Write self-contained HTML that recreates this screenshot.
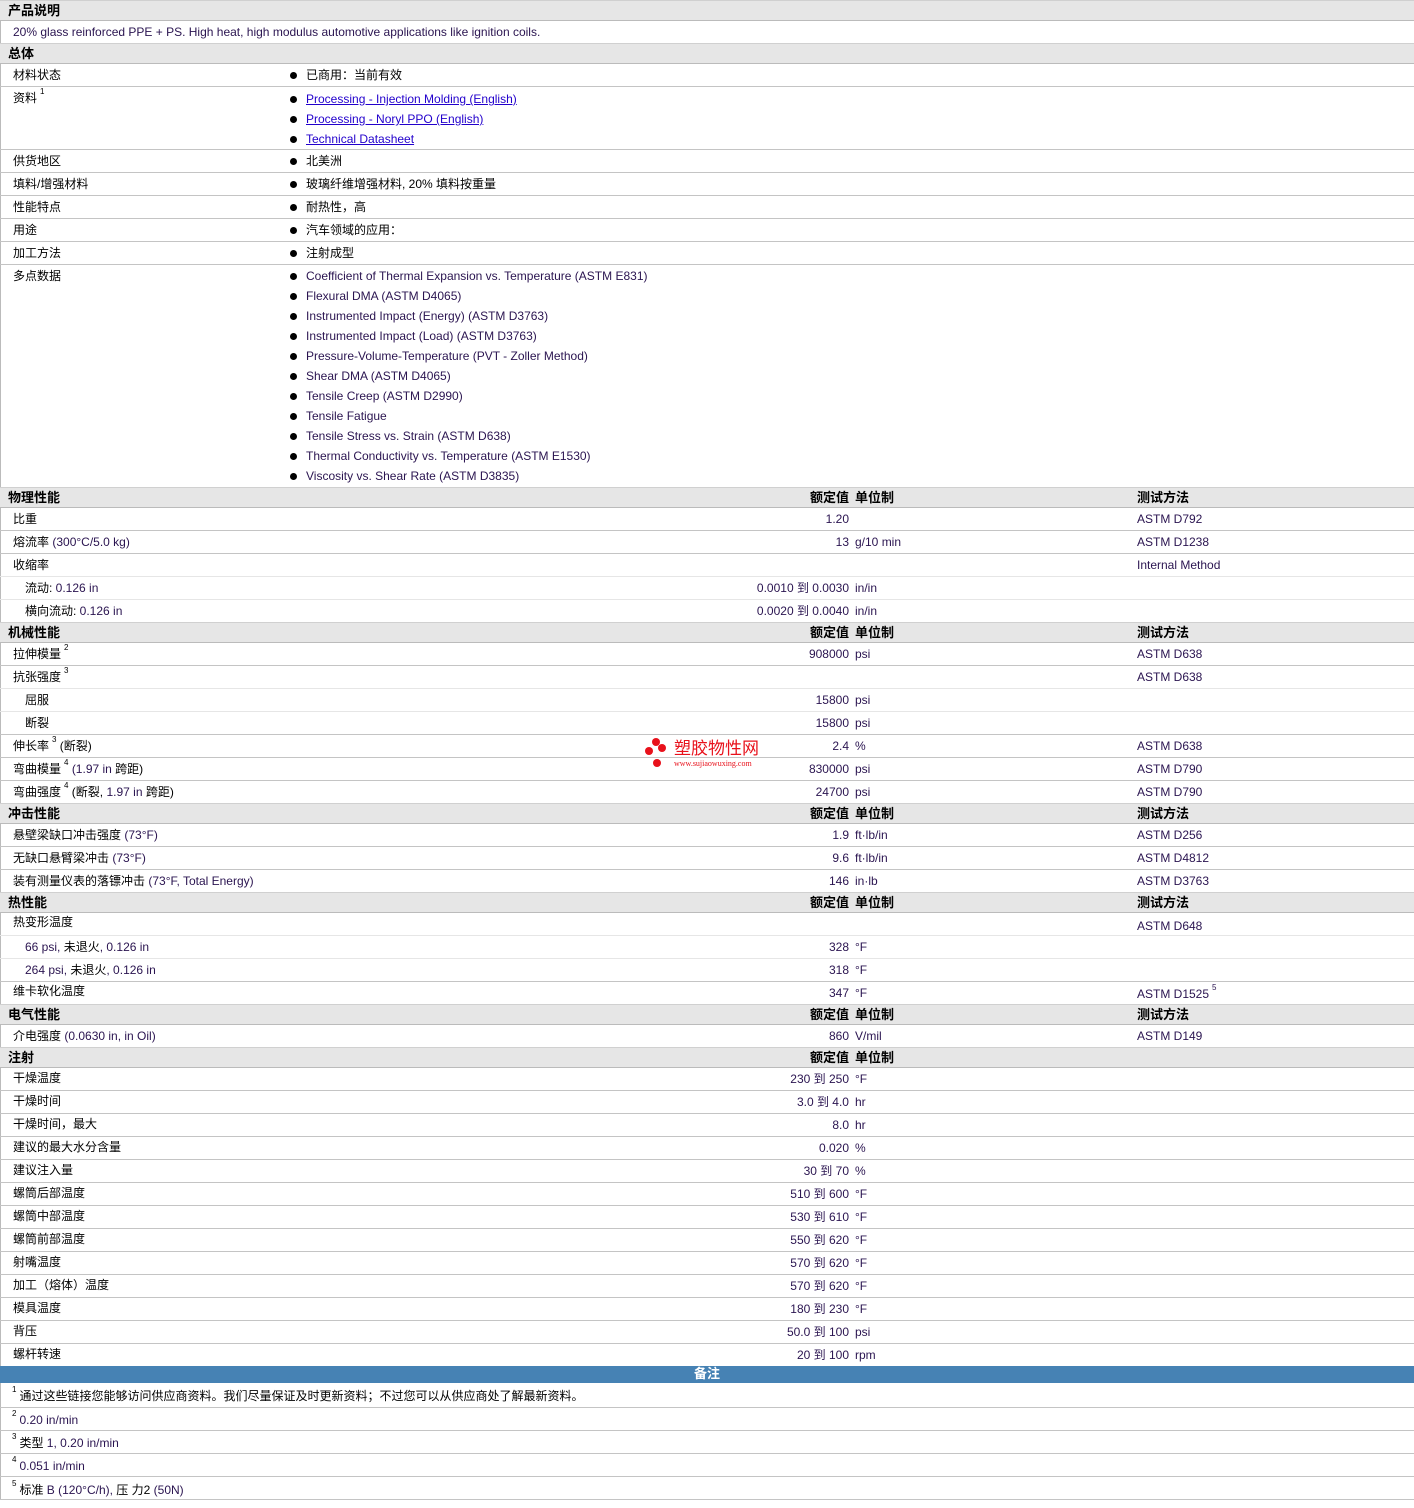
<!DOCTYPE html>
<html><head><meta charset="utf-8"><style>
body{margin:0;background:#fff;width:1414px;height:1508px;position:relative;overflow:hidden;font-family:"Liberation Sans","Noto Sans CJK SC",sans-serif;font-size:12px;color:#000}
.r{position:absolute;left:0;width:1414px;height:22px;border-bottom:1px solid #c4c4c4;box-sizing:content-box}
.s{border-bottom-color:#e6e6e6}
.h{background:#e6e6e6;height:19px;border-top:1px solid #d0d0d0;border-bottom:1px solid #bbb;font-weight:bold;font-size:13px}
.r span{position:absolute;top:4px;white-space:nowrap;line-height:14px}
.r span span{line-height:14px}
.h span{top:2px;line-height:15px}
.l{left:13px}.l2{left:25px}
.v{right:565px;color:#2a1450}
.u{left:855px;color:#2a1450}
.m{left:1137px;color:#2a1450}
.b{left:290px}
.b:before{content:"";position:absolute;left:0;top:4px;width:7px;height:7px;border-radius:50%;background:#000}
.b i{font-style:normal;margin-left:16px}
a{color:#2200cc;text-decoration:underline}
sup{font-size:8px;line-height:8px;vertical-align:top;position:relative;top:-3px;margin-left:3px}
.e{color:#2a1450}
#left{position:absolute;left:0;top:0;width:1px;height:1500px;background:#bbb}
</style></head><body>
<div id="left"></div>
<div class="r h" style="top:0"><span class="l" style="left:8px">产品说明</span></div>
<div class="r" style="top:21px"><span class="l e">20% glass reinforced PPE + PS. High heat, high modulus automotive applications like ignition coils.</span></div>
<div class="r h" style="top:43px"><span style="left:8px">总体</span></div>
<div class="r" style="top:64px"><span class="l">材料状态</span><span class="b"><i>已商用：当前有效</i></span></div>
<div class="r" style="top:87px;height:62px"><span class="l">资料<sup>1</sup></span><span class="b" style="top:5px"><i><a>Processing - Injection Molding (English)</a></i></span><span class="b" style="top:25px"><i><a>Processing - Noryl PPO (English)</a></i></span><span class="b" style="top:45px"><i><a>Technical Datasheet</a></i></span></div>
<div class="r" style="top:150px"><span class="l">供货地区</span><span class="b"><i>北美洲</i></span></div>
<div class="r" style="top:173px"><span class="l">填料/增强材料</span><span class="b"><i>玻璃纤维增强材料, 20% 填料按重量</i></span></div>
<div class="r" style="top:196px"><span class="l">性能特点</span><span class="b"><i>耐热性，高</i></span></div>
<div class="r" style="top:219px"><span class="l">用途</span><span class="b"><i>汽车领域的应用：</i></span></div>
<div class="r" style="top:242px"><span class="l">加工方法</span><span class="b"><i>注射成型</i></span></div>
<div class="r" style="top:265px;height:222px"><span class="l">多点数据</span>
<span class="b e" style="top:4px"><i>Coefficient of Thermal Expansion vs. Temperature (ASTM E831)</i></span>
<span class="b e" style="top:24px"><i>Flexural DMA (ASTM D4065)</i></span>
<span class="b e" style="top:44px"><i>Instrumented Impact (Energy) (ASTM D3763)</i></span>
<span class="b e" style="top:64px"><i>Instrumented Impact (Load) (ASTM D3763)</i></span>
<span class="b e" style="top:84px"><i>Pressure-Volume-Temperature (PVT - Zoller Method)</i></span>
<span class="b e" style="top:104px"><i>Shear DMA (ASTM D4065)</i></span>
<span class="b e" style="top:124px"><i>Tensile Creep (ASTM D2990)</i></span>
<span class="b e" style="top:144px"><i>Tensile Fatigue</i></span>
<span class="b e" style="top:164px"><i>Tensile Stress vs. Strain (ASTM D638)</i></span>
<span class="b e" style="top:184px"><i>Thermal Conductivity vs. Temperature (ASTM E1530)</i></span>
<span class="b e" style="top:204px"><i>Viscosity vs. Shear Rate (ASTM D3835)</i></span></div>
<div class="r h" style="top:487px"><span style="left:8px">物理性能</span><span style="right:565px">额定值</span><span style="left:855px">单位制</span><span style="left:1137px">测试方法</span></div>
<div class="r" style="top:508px"><span class="l">比重</span><span class="v">1.20</span><span class="m">ASTM D792</span></div>
<div class="r" style="top:531px"><span class="l">熔流率 <span class="e" style="position:static">(300°C/5.0 kg)</span></span><span class="v">13</span><span class="u">g/10 min</span><span class="m">ASTM D1238</span></div>
<div class="r s" style="top:554px"><span class="l">收缩率</span><span class="m">Internal Method</span></div>
<div class="r s" style="top:577px"><span class="l2">流动: <span class="e" style="position:static">0.126 in</span></span><span class="v">0.0010 到 0.0030</span><span class="u">in/in</span></div>
<div class="r" style="top:600px"><span class="l2">横向流动: <span class="e" style="position:static">0.126 in</span></span><span class="v">0.0020 到 0.0040</span><span class="u">in/in</span></div>
<div class="r h" style="top:622px"><span style="left:8px">机械性能</span><span style="right:565px">额定值</span><span style="left:855px">单位制</span><span style="left:1137px">测试方法</span></div>
<div class="r" style="top:643px"><span class="l">拉伸模量<sup>2</sup></span><span class="v">908000</span><span class="u">psi</span><span class="m">ASTM D638</span></div>
<div class="r s" style="top:666px"><span class="l">抗张强度<sup>3</sup></span><span class="m">ASTM D638</span></div>
<div class="r s" style="top:689px"><span class="l2">屈服</span><span class="v">15800</span><span class="u">psi</span></div>
<div class="r" style="top:712px"><span class="l2">断裂</span><span class="v">15800</span><span class="u">psi</span></div>
<div class="r" style="top:735px"><span class="l">伸长率<sup>3</sup> (断裂)</span><span class="v">2.4</span><span class="u">%</span><span class="m">ASTM D638</span></div>
<div class="r" style="top:758px"><span class="l">弯曲模量<sup>4</sup> <span class="e" style="position:static">(1.97 in</span> 跨距)</span><span class="v">830000</span><span class="u">psi</span><span class="m">ASTM D790</span></div>
<div class="r" style="top:781px"><span class="l">弯曲强度<sup>4</sup> (断裂, <span class="e" style="position:static">1.97 in</span> 跨距)</span><span class="v">24700</span><span class="u">psi</span><span class="m">ASTM D790</span></div>
<div class="r h" style="top:803px"><span style="left:8px">冲击性能</span><span style="right:565px">额定值</span><span style="left:855px">单位制</span><span style="left:1137px">测试方法</span></div>
<div class="r" style="top:824px"><span class="l">悬壁梁缺口冲击强度 <span class="e" style="position:static">(73°F)</span></span><span class="v">1.9</span><span class="u">ft·lb/in</span><span class="m">ASTM D256</span></div>
<div class="r" style="top:847px"><span class="l">无缺口悬臂梁冲击 <span class="e" style="position:static">(73°F)</span></span><span class="v">9.6</span><span class="u">ft·lb/in</span><span class="m">ASTM D4812</span></div>
<div class="r" style="top:870px"><span class="l">装有测量仪表的落镖冲击 <span class="e" style="position:static">(73°F, Total Energy)</span></span><span class="v">146</span><span class="u">in·lb</span><span class="m">ASTM D3763</span></div>
<div class="r h" style="top:892px"><span style="left:8px">热性能</span><span style="right:565px">额定值</span><span style="left:855px">单位制</span><span style="left:1137px">测试方法</span></div>
<div class="r s" style="top:913px"><span class="l" style="top:2px">热变形温度</span><span class="m" style="top:6px">ASTM D648</span></div>
<div class="r s" style="top:936px"><span class="l2 e">66 psi, <span style="position:static;color:#000">未退火</span>, 0.126 in</span><span class="v">328</span><span class="u">°F</span></div>
<div class="r" style="top:959px"><span class="l2 e">264 psi, <span style="position:static;color:#000">未退火</span>, 0.126 in</span><span class="v">318</span><span class="u">°F</span></div>
<div class="r" style="top:982px"><span class="l" style="top:2px">维卡软化温度</span><span class="v">347</span><span class="u">°F</span><span class="m" style="top:5px">ASTM D1525<sup>5</sup></span></div>
<div class="r h" style="top:1004px"><span style="left:8px">电气性能</span><span style="right:565px">额定值</span><span style="left:855px">单位制</span><span style="left:1137px">测试方法</span></div>
<div class="r" style="top:1025px"><span class="l">介电强度 <span class="e" style="position:static">(0.0630 in, in Oil)</span></span><span class="v">860</span><span class="u">V/mil</span><span class="m">ASTM D149</span></div>
<div class="r h" style="top:1047px"><span style="left:8px">注射</span><span style="right:565px">额定值</span><span style="left:855px">单位制</span></div>
<div class="r" style="top:1068px"><span class="l" style="top:3px">干燥温度</span><span class="v">230 到 250</span><span class="u">°F</span></div>
<div class="r" style="top:1091px"><span class="l" style="top:3px">干燥时间</span><span class="v">3.0 到 4.0</span><span class="u">hr</span></div>
<div class="r" style="top:1114px"><span class="l" style="top:3px">干燥时间，最大</span><span class="v">8.0</span><span class="u">hr</span></div>
<div class="r" style="top:1137px"><span class="l" style="top:3px">建议的最大水分含量</span><span class="v">0.020</span><span class="u">%</span></div>
<div class="r" style="top:1160px"><span class="l" style="top:3px">建议注入量</span><span class="v">30 到 70</span><span class="u">%</span></div>
<div class="r" style="top:1183px"><span class="l" style="top:3px">螺筒后部温度</span><span class="v">510 到 600</span><span class="u">°F</span></div>
<div class="r" style="top:1206px"><span class="l" style="top:3px">螺筒中部温度</span><span class="v">530 到 610</span><span class="u">°F</span></div>
<div class="r" style="top:1229px"><span class="l" style="top:3px">螺筒前部温度</span><span class="v">550 到 620</span><span class="u">°F</span></div>
<div class="r" style="top:1252px"><span class="l" style="top:3px">射嘴温度</span><span class="v">570 到 620</span><span class="u">°F</span></div>
<div class="r" style="top:1275px"><span class="l" style="top:3px">加工（熔体）温度</span><span class="v">570 到 620</span><span class="u">°F</span></div>
<div class="r" style="top:1298px"><span class="l" style="top:3px">模具温度</span><span class="v">180 到 230</span><span class="u">°F</span></div>
<div class="r" style="top:1321px"><span class="l" style="top:3px">背压</span><span class="v">50.0 到 100</span><span class="u">psi</span></div>
<div class="r" style="top:1344px;border-bottom:none"><span class="l" style="top:3px">螺杆转速</span><span class="v">20 到 100</span><span class="u">rpm</span></div>
<div style="position:absolute;top:1366px;left:0;width:1414px;height:17px;background:#4682b4;color:#fff;font-weight:bold;font-size:13px;text-align:center;line-height:16px">备注</div>
<div class="r" style="top:1384px;height:23px"><span class="l" style="left:12px;top:5px"><sup style="margin:0 3px 0 0">1</sup>通过这些链接您能够访问供应商资料。我们尽量保证及时更新资料；不过您可以从供应商处了解最新资料。</span></div>
<div class="r" style="top:1408px"><span class="l" style="left:12px;top:5px"><sup style="margin:0 3px 0 0">2</sup><span class="e" style="position:static">0.20 in/min</span></span></div>
<div class="r" style="top:1431px"><span class="l" style="left:12px;top:5px"><sup style="margin:0 3px 0 0">3</sup>类型 <span class="e" style="position:static">1, 0.20 in/min</span></span></div>
<div class="r" style="top:1454px"><span class="l" style="left:12px;top:5px"><sup style="margin:0 3px 0 0">4</sup><span class="e" style="position:static">0.051 in/min</span></span></div>
<div class="r" style="top:1477px"><span class="l" style="left:12px;top:6px"><sup style="margin:0 3px 0 0">5</sup>标准 <span class="e" style="position:static">B (120°C/h),</span> 压 力2 <span class="e" style="position:static">(50N)</span></span></div>
<div style="position:absolute;left:644px;top:737px;width:130px;height:36px">
<div style="position:absolute;left:8px;top:1px;width:8px;height:8px;border-radius:50%;background:#e8111b"></div>
<div style="position:absolute;left:14px;top:7px;width:8px;height:8px;border-radius:50%;background:#e8111b"></div>
<div style="position:absolute;left:1px;top:10px;width:8px;height:8px;border-radius:50%;background:#e8111b"></div>
<div style="position:absolute;left:9px;top:22px;width:8px;height:8px;border-radius:50%;background:#e8111b"></div>
<div style="position:absolute;left:30px;top:2px;color:#e8111b;font-size:17px;line-height:20px;white-space:nowrap">塑胶物性网</div>
<div style="position:absolute;left:30px;top:22px;color:#e8111b;font-size:8px;font-family:'Liberation Serif',serif;white-space:nowrap">www.sujiaowuxing.com</div>
</div>
</body></html>
